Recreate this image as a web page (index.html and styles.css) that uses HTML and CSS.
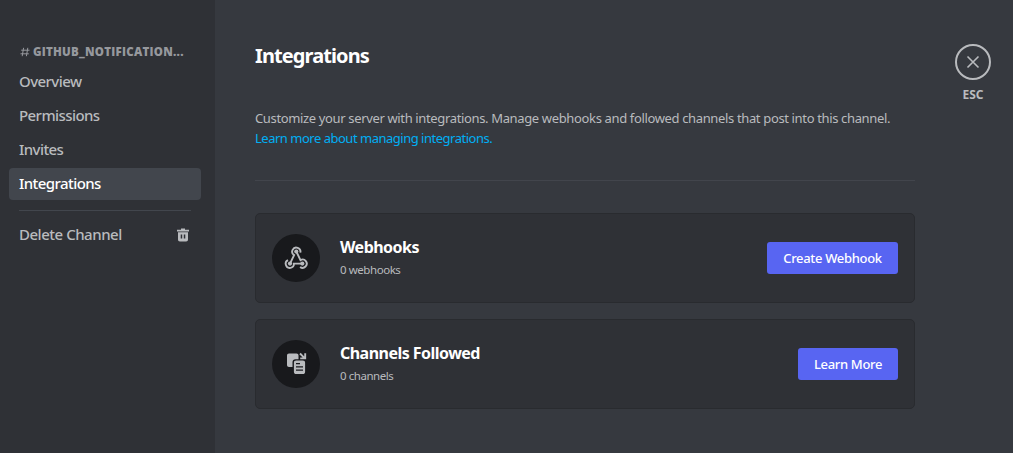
FILE: index.html
```html
<!DOCTYPE html>
<html lang="en">
<head>
<meta charset="utf-8">
<title>Integrations</title>
<link rel="stylesheet" href="styles.css">
</head>
<body>
<div class="app">
  <nav class="sidebar">
    <h2 class="channel"><svg class="hash" viewBox="0 0 10 10"><path d="M3.600.8 2.200 9.200M7.800.8 6.400 9.200M1.200 3.200h8.300M.5 6.800h8.300"/></svg><span class="channel-name">GITHUB_NOTIFICATION...</span></h2>
    <a class="item"><span>Overview</span></a>
    <a class="item"><span>Permissions</span></a>
    <a class="item"><span>Invites</span></a>
    <a class="item selected"><span>Integrations</span></a>
    <div class="separator"></div>
    <a class="item"><span class="delete-label">Delete Channel</span>
      <svg class="trash" viewBox="0 0 16 16"><path d="M6 1.600h4v1.200h4v1.700H2V2.800h4z"/><path fill-rule="evenodd" d="M3 5.200h10v7.300c0 1.200-.7 1.900-1.900 1.900H4.900c-1.200 0-1.900-.7-1.900-1.900zM5.700 7.400v4.200h1.500V7.400zm3.100 0v4.200h1.500V7.400z"/></svg>
    </a>
  </nav>
  <main class="content">
    <h1 class="title">Integrations</h1>
    <p class="intro">Customize your server with integrations. Manage webhooks and followed channels that post into this channel.<br><a class="link">Learn more about managing integrations.</a></p>
    <div class="divider"></div>
    <section class="card">
      <svg class="icon" viewBox="0 0 48 48">
        <circle class="disc" cx="24" cy="24" r="24"/>
        <g class="hook"><path d="M28.300 18.600A4.100 4.100 0 1 0 22.100 21.100L18 29.600"/><path d="M24.300 17.500 28.500 26.100A4.100 4.100 0 1 1 28.100 32.900"/><path d="M16 26.100A4.100 4.100 0 1 0 21.900 29.600H30.500"/></g>
        <g class="glyph"><circle cx="24.300" cy="17.600" r="2.100"/><circle cx="18" cy="29.600" r="2.100"/><circle cx="30.300" cy="29.600" r="2.100"/></g>
      </svg>
      <div class="info"><h3 class="name">Webhooks</h3><div class="count">0 webhooks</div></div>
      <button class="button create">Create Webhook</button>
    </section>
    <section class="card">
      <svg class="icon" viewBox="0 0 48 48">
        <circle class="disc" cx="24" cy="24" r="24"/>
        <path class="glyph" d="M17 13.500h7.500c1.200 0 2 .8 2 2V19.200H23.500c-1.900 0-3 1.100-3 3v4.800H17c-1.200 0-2-.8-2-2v-9.500c0-1.200.8-2 2-2z"/>
        <path class="glyph" fill-rule="evenodd" d="M24.200 20.600h6.600c1.500 0 2.300.8 2.300 2.200v8.900c0 1.500-.8 2.300-2.300 2.300h-6.600c-1.500 0-2.300-.8-2.300-2.300v-8.900c0-1.400.8-2.200 2.300-2.200zM24 23.100v1.200h4v-1.200zm0 3.200v1.200h7v-1.200zm0 3.200v1.200h7v-1.200z"/>
        <path class="arrow" d="m28 13.500 4.600 4.600M33.200 13.300v5.100h-5"/>
      </svg>
      <div class="info"><h3 class="name">Channels Followed</h3><div class="count">0 channels</div></div>
      <button class="button more">Learn More</button>
    </section>
  </main>
  <aside class="close">
    <svg class="close-icon" viewBox="0 0 36 36"><circle cx="18" cy="18" r="17"/><path d="m12.500 12.500 11 11m0-11-11 11"/></svg>
    <span class="esc">ESC</span>
  </aside>
</div>
</body>
</html>
```
FILE: styles.css
```css
* { box-sizing: border-box; }
body, h1, h2, h3, p { margin: 0; }
body { background: #36393f; color: #b9bbbe; font-family: "Noto Sans", sans-serif; overflow: hidden; }
svg { display: block; flex: none; }
.app { display: flex; height: 453px; }
.sidebar { width: 215px; flex: none; background: #2f3136; padding: 44px 14px 0 9px; display: flex; flex-direction: column; gap: 2px; }
.channel { display: flex; align-items: center; height: 16px; margin-bottom: 4px; padding-left: 11px; gap: 3px; color: #96989d; font: 800 11.5px/16px "Open Sans", sans-serif; letter-spacing: 0.24px; white-space: nowrap; }
.hash { width: 10px; height: 10px; fill: none; stroke: #96989d; stroke-width: 1; }
.item { display: flex; align-items: center; justify-content: space-between; height: 32px; padding: 0 10px; border-radius: 4px; font-size: 15px; font-weight: 500; line-height: 20px; letter-spacing: -0.57px; white-space: nowrap; }
.item span { padding-bottom: 2px; }
.selected { background: #42464d; color: #fff; }
.delete-label { letter-spacing: -0.48px; }
.separator { height: 1px; margin: 8px 10px 6px; background: #42464d; }
.trash { width: 16px; height: 16px; fill: #b9bbbe; }
.content { width: 660px; flex: none; margin-left: 40px; padding-top: 44px; }
.title { color: #fff; font-size: 20px; font-weight: 700; line-height: 24px; height: 24px; letter-spacing: -0.9px; }
.intro { margin-top: 40px; font-size: 13px; line-height: 20px; letter-spacing: -0.355px; white-space: nowrap; }
.link { color: #00aff4; letter-spacing: -0.49px; }
.divider { height: 1px; margin: 32px 0; background: #42454c; }
.card { display: flex; align-items: center; height: 90px; padding: 0 16px; margin-bottom: 16px; border: 1px solid #292b2f; border-radius: 5px; background: #2f3136; white-space: nowrap; }
.icon { width: 48px; height: 48px; }
.disc { fill: #18191c; }
.glyph { fill: #b9bbbe; }
.hook, .arrow { fill: none; stroke: #b9bbbe; stroke-width: 1.9; }
.info { flex: 1; margin-left: 20px; }
.name { color: #fff; font-size: 16px; font-weight: 700; line-height: 20px; letter-spacing: -0.53px; }
.count { margin-top: 4px; font-size: 11.5px; line-height: 18px; letter-spacing: -0.44px; }
.button { height: 32px; padding: 0; border: 0; border-radius: 3px; background: #5865f2; color: #fff; font: 500 13px/18px "Noto Sans", sans-serif; letter-spacing: -0.32px; }
.create { width: 131px; }
.more { width: 100px; }
.close { width: 36px; margin: 44px 0 0 40px; display: flex; flex-direction: column; align-items: center; gap: 6px; }
.close-icon { width: 36px; height: 36px; fill: none; stroke: #b9bbbe; stroke-width: 2; }
.close-icon path { stroke-width: 1.6; }
.esc { font-size: 12px; font-weight: 700; line-height: 18px; }
```
